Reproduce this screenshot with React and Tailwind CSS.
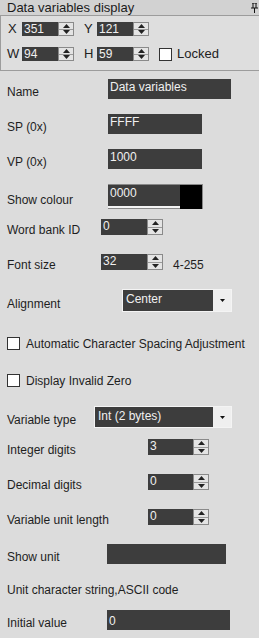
import React from 'react';

const FONT = { fontFamily: '"Liberation Sans", Arial, sans-serif' };

const Spinner = () => (
  <div className="w-[16px] h-full bg-[#e4e4e4] border border-[#8a8a8a] flex flex-col">
    <div className="flex-1 flex items-center justify-center border-b border-[#9a9a9a]">
      <svg width="7" height="4" viewBox="0 0 7 4"><path d="M0 4 L3.5 0 L7 4 Z" fill="#222" /></svg>
    </div>
    <div className="flex-1 flex items-center justify-center">
      <svg width="7" height="4" viewBox="0 0 7 4"><path d="M0 0 L3.5 4 L7 0 Z" fill="#222" /></svg>
    </div>
  </div>
);

const Box = ({ value, className }) => (
  <div className={`h-full bg-[#3d3d3d] text-[#f0f0f0] text-[12px] leading-[14px] pl-[2px] ${className}`}>
    {value}
  </div>
);

const Check = () => (
  <div className="w-[13px] h-[13px] bg-white border border-[#333] shrink-0" />
);

const Label = ({ children, w }) => (
  <div className={`${w} pl-[7px] translate-y-[3px] text-[12px] text-[#1e1e1e] shrink-0 whitespace-nowrap`}>
    {children}
  </div>
);

const Select = ({ value, dark }) => (
  <div className="h-full flex border border-[#f4f4f4]">
    <div className={`${dark} h-full bg-[#3d3d3d] text-[#f0f0f0] text-[12px] pl-[3px] leading-[18px]`}>{value}</div>
    <div className="w-[18px] h-full bg-[#efefef] flex items-center justify-center">
      <svg width="5" height="3" viewBox="0 0 5 3"><path d="M0 0 L2.5 3 L5 0 Z" fill="#111" /></svg>
    </div>
  </div>
);

export default function App() {
  return (
    <div className="w-[259px] h-[638px] bg-[#dcdcdc] overflow-hidden flex flex-col" style={FONT}>
      <div className="h-[16px] shrink-0 bg-[#d2d2d2] border-b border-[#9c9c9c] flex items-center justify-between pl-[7px] pr-[1px]">
        <span className="text-[13px] text-[#1a1a1a] leading-[15px]">Data variables display</span>
        <svg width="7" height="10" viewBox="0 0 7 10">
          <path d="M1 0 H6 M2 0 V5 M5 0 V5 M0 5 H7 M3.5 5 V10" stroke="#111" strokeWidth="1" fill="none" />
        </svg>
      </div>

      <div className="h-[55px] shrink-0 pt-[6px] border-l border-b border-[#9c9c9c] bg-[#dedede]">
        <div className="flex items-center h-[14px]">
          <div className="w-[21px] pl-[7px] text-[13px] text-[#222]">X</div>
          <Box value="351" className="w-[36px]" />
          <Spinner />
          <div className="w-[23px] pl-[10px] text-[13px] text-[#222]">Y</div>
          <Box value="121" className="w-[36px]" />
          <Spinner />
        </div>
        <div className="flex items-center h-[14px] mt-[11px]">
          <div className="w-[21px] pl-[6px] text-[13px] text-[#222]">W</div>
          <Box value="94" className="w-[36px]" />
          <Spinner />
          <div className="w-[23px] pl-[10px] text-[13px] text-[#222]">H</div>
          <Box value="59" className="w-[36px]" />
          <Spinner />
          <div className="ml-[10px] flex items-center gap-[5px]">
            <Check />
            <span className="text-[13px] text-[#222]">Locked</span>
          </div>
        </div>
      </div>

      <div className="flex items-center h-[20px] mt-[8px]">
        <Label w="w-[108px]">Name</Label>
        <Box value="Data variables" className="w-[123px] leading-[17px]" />
      </div>
      <div className="flex items-center h-[20px] mt-[15px]">
        <Label w="w-[108px]">SP (0x)</Label>
        <Box value="FFFF" className="w-[94px] leading-[17px]" />
      </div>
      <div className="flex items-center h-[20px] mt-[15px]">
        <Label w="w-[108px]">VP (0x)</Label>
        <Box value="1000" className="w-[94px] leading-[17px]" />
      </div>
      <div className="flex items-center h-[25px] mt-[15px]">
        <Label w="w-[108px]">Show colour</Label>
        <div className="flex h-full border-t border-r border-[#888]">
          <div className="w-[72px] h-full flex flex-col">
            <div className="flex-1 bg-[#3d3d3d] text-[#f0f0f0] text-[12px] pl-[2px] leading-[17px]">0000</div>
            <div className="h-[3px] bg-[#f4f4f4] border-b border-[#888]" />
          </div>
          <div className="w-[22px] h-full bg-black" />
        </div>
      </div>
      <div className="flex items-center h-[16px] mt-[10px]">
        <Label w="w-[101px]">Word bank ID</Label>
        <Box value="0" className="w-[46px]" />
        <Spinner />
      </div>
      <div className="flex items-center h-[16px] mt-[19px]">
        <Label w="w-[101px]">Font size</Label>
        <Box value="32" className="w-[46px]" />
        <Spinner />
        <span className="ml-[10px] text-[12px] text-[#1e1e1e] translate-y-[3px]">4-255</span>
      </div>
      <div className="flex items-center h-[23px] mt-[19px]">
        <Label w="w-[122px]">Alignment</Label>
        <Select value="Center" dark="w-[90px]" />
      </div>
      <div className="flex items-center h-[13px] mt-[25px] pl-[7px] gap-[6px]">
        <Check />
        <span className="text-[12px] text-[#1e1e1e] whitespace-nowrap">Automatic Character Spacing Adjustment</span>
      </div>
      <div className="flex items-center h-[13px] mt-[24px] pl-[7px] gap-[6px]">
        <Check />
        <span className="text-[12px] text-[#1e1e1e]">Display Invalid Zero</span>
      </div>
      <div className="flex items-center h-[22px] mt-[19px]">
        <Label w="w-[94px]">Variable type</Label>
        <Select value="Int (2 bytes)" dark="w-[118px]" />
      </div>
      <div className="flex items-center h-[16px] mt-[11px]">
        <Label w="w-[148px]">Integer digits</Label>
        <Box value="3" className="w-[45px]" />
        <Spinner />
      </div>
      <div className="flex items-center h-[16px] mt-[19px]">
        <Label w="w-[148px]">Decimal digits</Label>
        <Box value="0" className="w-[45px]" />
        <Spinner />
      </div>
      <div className="flex items-center h-[16px] mt-[19px]">
        <Label w="w-[148px]">Variable unit length</Label>
        <Box value="0" className="w-[45px]" />
        <Spinner />
      </div>
      <div className="flex items-center h-[20px] mt-[19px]">
        <Label w="w-[107px]">Show unit</Label>
        <Box value="" className="w-[119px]" />
      </div>
      <div className="h-[14px] mt-[17px] pl-[7px] text-[12px] text-[#1e1e1e]">
        Unit character string,ASCII code
      </div>
      <div className="flex items-center h-[20px] mt-[15px]">
        <Label w="w-[107px]">Initial value</Label>
        <Box value="0" className="w-[123px] leading-[22px]" />
      </div>
    </div>
  );
}
